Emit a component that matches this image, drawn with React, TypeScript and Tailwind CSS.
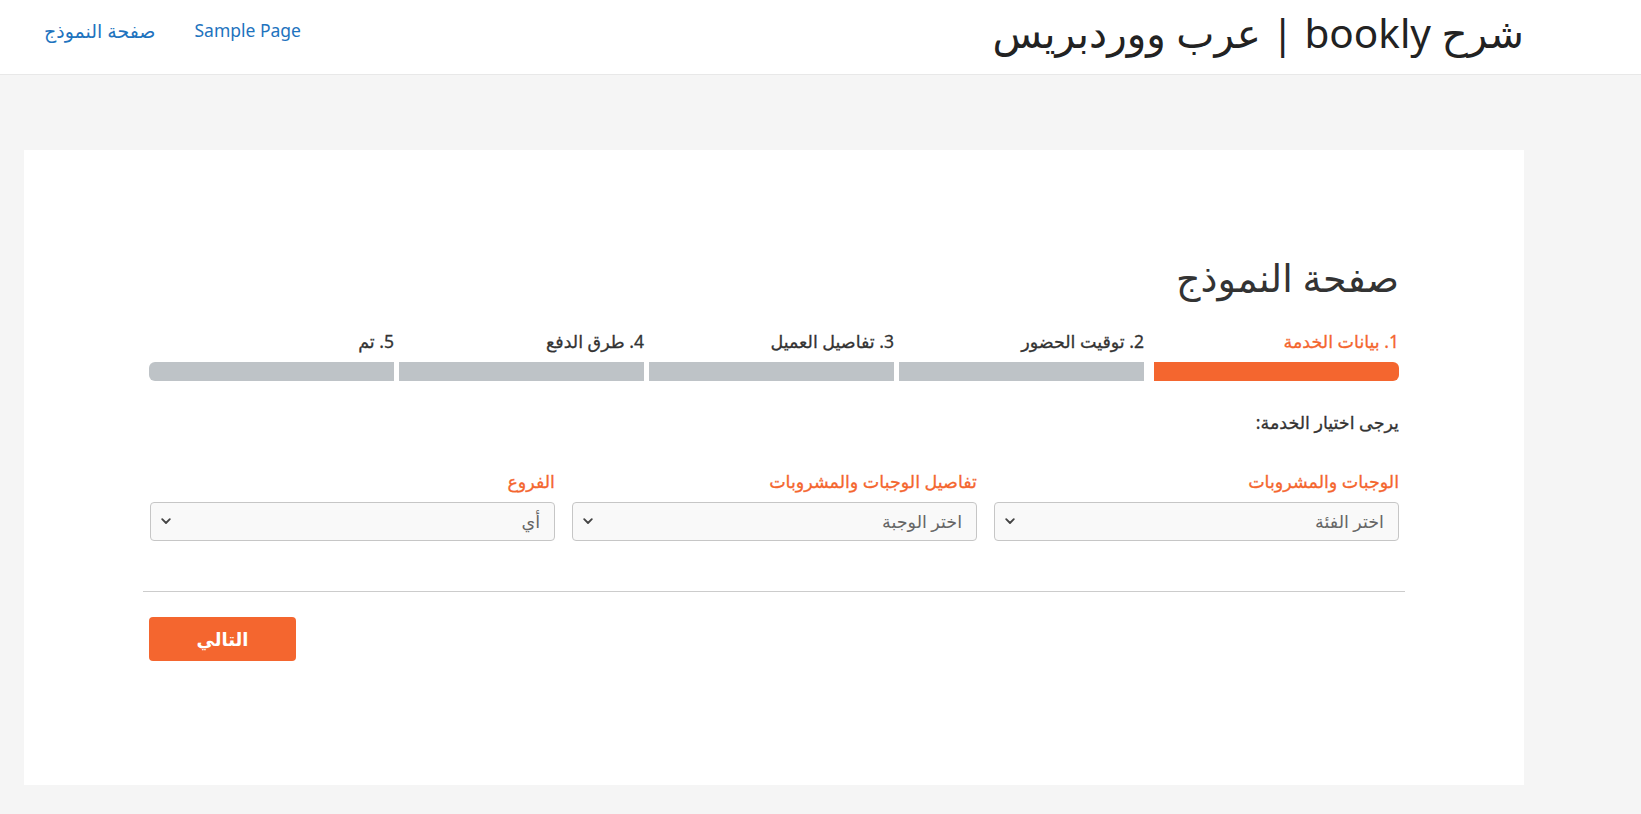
const orange = "text-[#f4662f]";

function Chevron() {
  return (
    <svg width="10" height="7" viewBox="0 0 10 7" className="shrink-0">
      <path d="M1.2 1.2 L5 5 L8.8 1.2" fill="none" stroke="#444" strokeWidth="1.8" strokeLinecap="round" strokeLinejoin="round" />
    </svg>
  );
}

function SelectBox({ label, placeholder }: { label: string; placeholder: string }) {
  return (
    <div className="flex flex-col w-[405px]">
      <p className={`text-[17.5px] leading-[22px] [-webkit-text-stroke:0.3px_#f4662f] ${orange}`}>{label}</p>
      <div className="mt-[10px] h-[39px] flex items-center justify-between pr-[14px] pl-[10px] bg-[#f9f9f9] border border-[#c6c6c6] rounded-[4px]">
        <span className="text-[17.5px] text-[#666]">{placeholder}</span>
        <Chevron />
      </div>
    </div>
  );
}

const steps = [
  { label: "1. بيانات الخدمة", active: true },
  { label: "2. توقيت الحضور", active: false },
  { label: "3. تفاصيل العميل", active: false },
  { label: "4. طرق الدفع", active: false },
  { label: "5. تم", active: false },
];

export default function App() {
  return (
    <div className="min-h-[814px] bg-[#f5f5f5]" style={{ fontFamily: '"Noto Sans", "DejaVu Sans", sans-serif' }}>
      {/* header */}
      <header className="h-[75px] bg-white border-b border-[#e8e8e8]">
        <div className="w-[1500px] ml-[24px] h-full flex items-start justify-between">
          <nav className="flex gap-[39px] pl-[20px] pt-[17px] text-[17.5px] text-[#1e73be]">
            <a className="text-[19px]">صفحة النموذج</a>
            <a>Sample Page</a>
          </nav>
          <h1 className="pt-[3px] text-[40.5px] leading-[60px] text-[#222]" dir="rtl">
            شرح bookly | عرب ووردبريس
          </h1>
        </div>
      </header>

      {/* content */}
      <main className="pt-[75px] pb-[29px]">
        <div className="w-[1500px] ml-[24px] h-[635px] bg-white pt-[102px] px-[125px]" dir="rtl">
          <h2 className="text-[38px] leading-[50px] text-[#333]">صفحة النموذج</h2>

          {/* steps */}
          <div className="mt-[28px] flex">
            {steps.map((s, i) => (
              <div key={i} className={`w-[245px] ${i === 0 ? "ml-[10px]" : i < 4 ? "ml-[5px]" : ""}`}>
                <p
                  className={`text-[17.5px] leading-[22px] ${
                    s.active ? `${orange} [-webkit-text-stroke:0.3px_#f4662f]` : "text-[#333] [-webkit-text-stroke:0.3px_#333]"
                  }`}
                >
                  {s.label}
                </p>
                <div
                  className={`mt-[10px] h-[19px] ${s.active ? "bg-[#f4662f] rounded-r-[6px]" : "bg-[#bec3c7]"} ${i === 4 ? "rounded-l-[6px]" : ""}`}
                />
              </div>
            ))}
          </div>

          <p className="mt-[30px] text-[17.5px] leading-[22px] text-[#333] [-webkit-text-stroke:0.3px_#333]">يرجى اختيار الخدمة:</p>

          <div className="mt-[37px] flex gap-[17px]">
            <SelectBox label="الوجبات والمشروبات" placeholder="اختر الفئة" />
            <SelectBox label="تفاصيل الوجبات والمشروبات" placeholder="اختر الوجبة" />
            <SelectBox label="الفروع" placeholder="أي" />
          </div>

          <div className="mt-[50px] -mx-[6px] border-t border-[#cccccc]" />

          <div className="mt-[25px] flex justify-end">
            <button className="w-[147px] h-[44px] rounded-[4px] bg-[#f4662f] text-white text-[18px] font-bold">
              التالي
            </button>
          </div>
        </div>
      </main>
    </div>
  );
}
